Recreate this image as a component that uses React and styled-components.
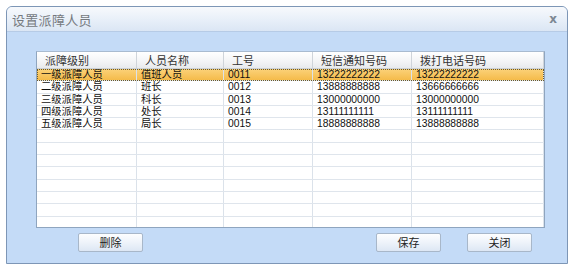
import styled, { createGlobalStyle } from 'styled-components'

const GlobalStyle = createGlobalStyle`
  html, body {
    margin: 0;
    padding: 0;
    background: #ffffff;
  }
  body {
    font-family: "Liberation Sans", "Noto Sans CJK SC", sans-serif;
  }
`

const columns = [
  { title: '派障级别', width: 100 },
  { title: '人员名称', width: 87 },
  { title: '工号', width: 89 },
  { title: '短信通知号码', width: 99 },
  { title: '拨打电话号码', width: 132 },
]

const rows = [
  ['一级派障人员', '值班人员', '0011', '13222222222', '13222222222'],
  ['二级派障人员', '班长', '0012', '13888888888', '13666666666'],
  ['三级派障人员', '科长', '0013', '13000000000', '13000000000'],
  ['四级派障人员', '处长', '0014', '13111111111', '13111111111'],
  ['五级派障人员', '局长', '0015', '18888888888', '13888888888'],
]

const TOTAL_ROWS = 13

export default function App() {
  const filled = [...rows]
  while (filled.length < TOTAL_ROWS) filled.push(['', '', '', '', ''])

  return (
    <>
      <GlobalStyle />
      <Window>
        <TitleBar>
          <Title>设置派障人员</Title>
          <CloseButton>x</CloseButton>
        </TitleBar>
        <Body>
          <Grid>
            <HeaderRow>
              {columns.map((col) => (
                <HeaderCell key={col.title} style={{ width: col.width }}>
                  {col.title}
                </HeaderCell>
              ))}
            </HeaderRow>
            {filled.map((row, index) => (
              <Row key={index} selected={index === 0}>
                {row.map((value, i) => (
                  <Cell key={i} style={{ width: columns[i].width }}>
                    {value}
                  </Cell>
                ))}
              </Row>
            ))}
          </Grid>
          <ButtonBar>
            <Button>删除</Button>
            <Spacer />
            <Button>保存</Button>
            <Button>关闭</Button>
          </ButtonBar>
        </Body>
      </Window>
    </>
  )
}

const Window = styled.div`
  margin: 6px 0 0 6px;
  width: 562px;
  height: 258px;
  box-sizing: border-box;
  border: 1px solid #7d96b6;
  border-radius: 6px 6px 0 0;
  background: #c4dbf7;
  display: flex;
  flex-direction: column;
  overflow: hidden;
`

const TitleBar = styled.div`
  height: 24px;
  flex: 0 0 24px;
  display: flex;
  align-items: center;
  justify-content: space-between;
  padding: 0 10px 0 5px;
  background: linear-gradient(#f7f9fc, #e6eef8 60%, #dbe6f4);
  border-bottom: 1px solid #b6cbe6;
`

const Title = styled.div`
  font-family: "Noto Sans CJK SC", sans-serif;
  font-size: 13px;
  color: #75797e;
  letter-spacing: 0.3px;
`

const CloseButton = styled.div`
  font-family: "DejaVu Sans", sans-serif;
  font-size: 12px;
  font-weight: bold;
  color: #7d8893;
  line-height: 1;
`

const Body = styled.div`
  flex: 1;
  padding: 19px 21px 0 29px;
  display: flex;
  flex-direction: column;
`

const Grid = styled.div`
  width: 509px;
  height: 177px;
  box-sizing: border-box;
  background: #ffffff;
  border: 1px solid #8fa5bf;
  border-top-color: #a9bbd0;
  overflow: hidden;
`

const HeaderRow = styled.div`
  display: flex;
  height: 16px;
  background: linear-gradient(#ffffff, #f3f4f6 60%, #e8eaed);
  border-bottom: 1px solid #c9cfd6;
`

const HeaderCell = styled.div`
  box-sizing: border-box;
  padding-left: 8px;
  font-family: "Noto Sans CJK SC", sans-serif;
  font-size: 11px;
  line-height: 16px;
  color: #333;
  border-right: 1px solid #cfd4da;
  white-space: nowrap;
  overflow: hidden;
`

const Row = styled.div`
  display: flex;
  height: 12.3px;
  box-sizing: border-box;
  border-bottom: 1px solid #dfe5ec;
  ${({ selected }) =>
    selected &&
    `
    background: linear-gradient(#fbd27a, #f5bb4a);
    outline: 1px dotted #6b5a2a;
    outline-offset: -1px;
  `}
`

const Cell = styled.div`
  box-sizing: border-box;
  padding-left: 4px;
  font-family: "Liberation Sans", "Noto Sans CJK SC", sans-serif;
  font-size: 10.3px;
  line-height: 11px;
  color: #111;
  border-right: 1px solid #dbe2ea;
  white-space: nowrap;
  overflow: hidden;
`

const ButtonBar = styled.div`
  display: flex;
  align-items: center;
  gap: 26px;
  margin-top: 5px;
  width: 509px;
  padding: 0 13px 0 42px;
  box-sizing: border-box;
`

const Spacer = styled.div`
  flex: 1;
`

const Button = styled.button`
  width: 65px;
  height: 19px;
  padding: 0;
  border: 1px solid #a8b7c9;
  border-radius: 2px;
  background: linear-gradient(#fdfeff, #eef3fa 50%, #dde7f4);
  font-family: "Noto Sans CJK SC", sans-serif;
  font-size: 11px;
  color: #222;
  line-height: 17px;
`
